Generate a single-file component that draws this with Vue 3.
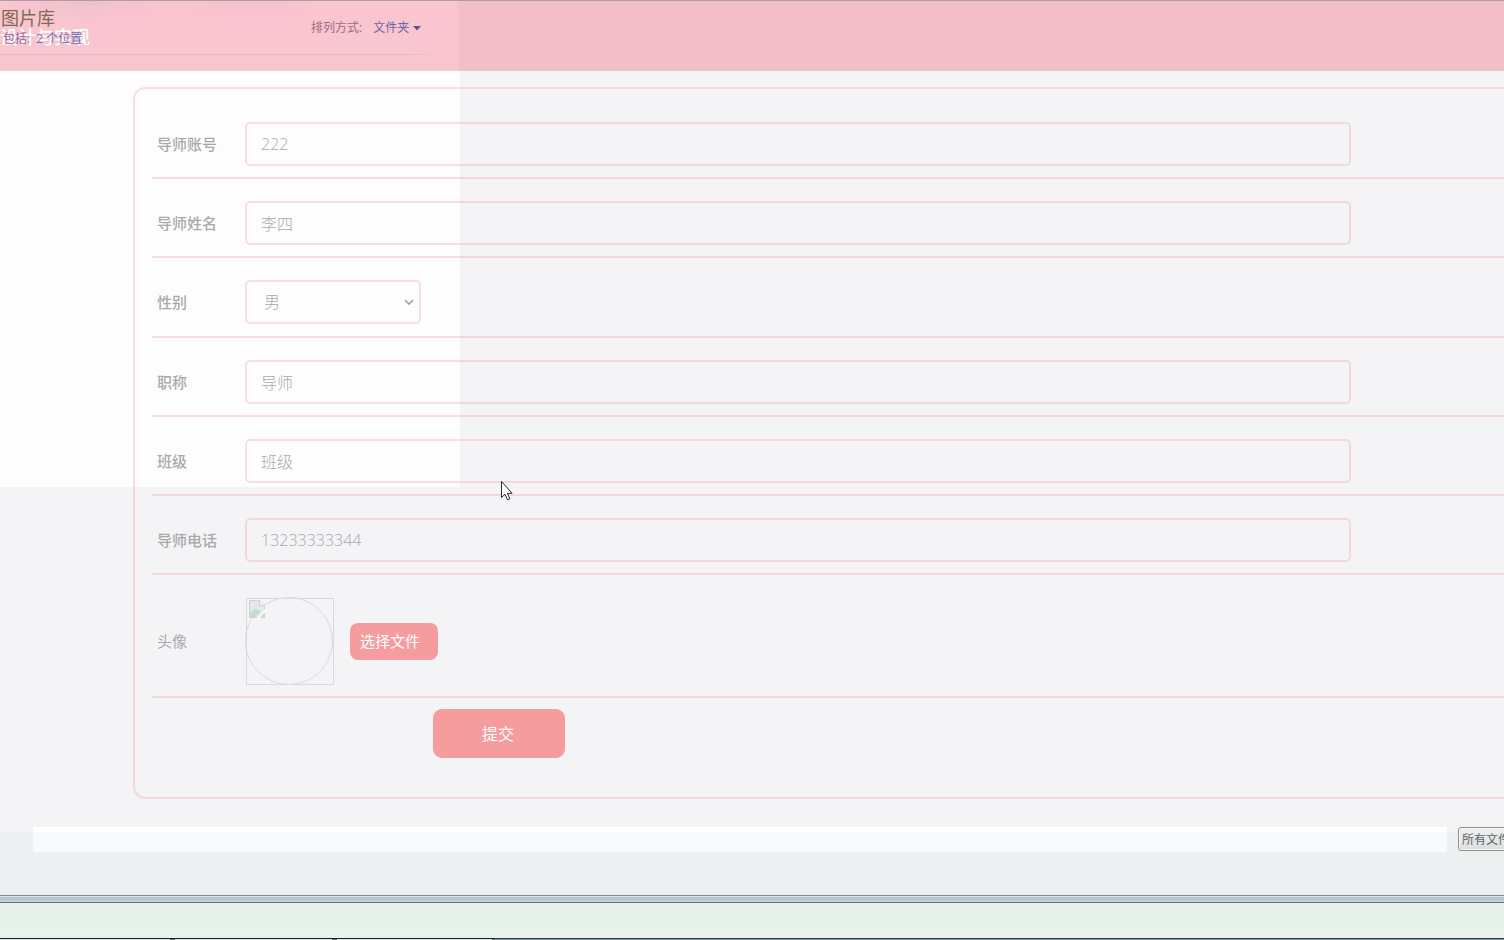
<script setup>
import { reactive } from 'vue'

const form = reactive({
  account: '222',
  name: '李四',
  gender: '男',
  title: '导师',
  klass: '班级',
  phone: '13233333344',
})

const fields = [
  { key: 'account', label: '导师账号' },
  { key: 'name', label: '导师姓名' },
  { key: 'gender', label: '性别', options: ['男', '女'] },
  { key: 'title', label: '职称' },
  { key: 'klass', label: '班级' },
  { key: 'phone', label: '导师电话' },
]
</script>

<template>
  <div class="screen">
    <div class="ghost" aria-hidden="true"></div>

    <header class="topbar">
      <h1 class="site-title">设计与实现</h1>
      <div class="library">
        <div class="library-name">图片库</div>
        <div class="library-info">包括: <a href="#">2 个位置</a></div>
      </div>
      <div class="arrange">
        <span>排列方式:</span>
        <button type="button" class="arrange-button">
          文件夹
          <svg width="8" height="5" viewBox="0 0 8 5"><path d="M0 0h8L4 4.5z" fill="#5b5590" /></svg>
        </button>
      </div>
    </header>

    <main class="content">
      <form class="card" @submit.prevent>
        <div v-for="f in fields" :key="f.key" class="row">
          <label class="label" :for="f.key">{{ f.label }}</label>
          <div v-if="f.options" class="select-wrap">
            <select :id="f.key" v-model="form[f.key]" class="control select">
              <option v-for="o in f.options" :key="o">{{ o }}</option>
            </select>
            <svg class="chevron" width="10" height="7" viewBox="0 0 10 7">
              <path d="M1 1l4 4 4-4" fill="none" stroke="#a3a3a6" stroke-width="1.700" />
            </svg>
          </div>
          <input v-else :id="f.key" v-model="form[f.key]" type="text" class="control text" />
        </div>

        <div class="row">
          <span class="label photo-label">头像</span>
          <svg class="avatar" width="89" height="88" viewBox="0 0 89 88" role="img" aria-label="头像">
            <rect x="1.5" y="1.5" width="87" height="86" fill="none" stroke="#dadade" />
            <circle cx="44" cy="44" r="43.5" fill="none" stroke="#dadade" />
            <path d="M4.5 3.500h10l5 5v12h-15z" fill="#e2e8f2" stroke="#cfcfd6" />
            <path d="M14.500 3.500v5h5" fill="#f6f6f9" stroke="#cfcfd6" />
            <path d="M5 20v-4l5-4 4 1 2 2-6 5z" fill="#c4dcc8" />
            <path d="M11 21.500L20.500 11.500v3.500l-6 6.500z" fill="#f8f9f6" />
            <path d="M15 20.500l4.500-5v5z" fill="#cbdccf" />
          </svg>
          <button type="button" class="file-button">选择文件</button>
        </div>

        <button type="submit" class="submit">提交</button>
      </form>
    </main>

    <section class="file-bar">
      <input type="text" class="filename" aria-label="文件名" />
      <button type="button" class="filter">所有文件</button>
    </section>
    <div class="window-edge"></div>
    <footer class="taskbar">
      <svg class="task-edge" width="500" height="2" viewBox="0 0 500 2">
        <path d="M0 .5h494" stroke="#14211f" />
        <path d="M0 1.500h494" stroke="#dfeae8" />
        <path d="M170 1.500h5M332 1.500h5M492 1.500h3" stroke="#65716f" />
      </svg>
    </footer>

    <svg class="cursor" width="13" height="20" viewBox="0 0 13 20" aria-hidden="true">
      <path d="M.5 .5v16l3.500-3.300 2.600 5.600 2.300-1-2.500-5.500h4.700z" fill="#fff" stroke="#2c2836" />
    </svg>
  </div>
</template>

<style>
body {
  background: #f4f4f6;
}
</style>

<style scoped>
* {
  box-sizing: border-box;
}

.screen {
  position: relative;
  display: flex;
  flex-direction: column;
  min-height: 100vh;
  overflow: hidden;
  isolation: isolate;
  background: #f4f4f6;
  font-family: "Open Sans", "Noto Sans CJK SC", sans-serif;
  font-size: 16px;
}

button,
input,
select {
  font: inherit;
}

/* translucent window left over from the picture library */
.ghost {
  position: absolute;
  z-index: -1;
  top: 0;
  left: 0;
  width: 460px;
  height: 487px;
  background: #fefdfe;
}

.topbar {
  position: relative;
  display: flex;
  height: 71px;
  border-top: 1px solid #b49ba5;
  background: linear-gradient(90deg, #f9c5cf 458px, #f2bec7 458px);
}

.topbar::after {
  content: "";
  position: absolute;
  left: 0;
  top: 53px;
  width: 446px;
  height: 1px;
  background: linear-gradient(90deg, #e5b4c5 90%, #f9c5cf);
}

.site-title {
  position: absolute;
  left: 0;
  top: 24px;
  margin: 0;
  color: #fff;
  font-size: 18px;
  font-weight: 500;
  line-height: 24px;
}

.library {
  position: relative;
  width: 311px;
  padding-top: 5px;
  background: radial-gradient(ellipse 80px 20px at 90px 0, #efc1cd, transparent),
    radial-gradient(ellipse 80px 20px at 250px 0, #f2c2cd, transparent);
}

.library-name {
  padding-left: 1px;
  color: #7f6a55;
  font-size: 18px;
  line-height: 24px;
}

.library-info {
  display: flex;
  gap: 6px;
  padding-left: 3px;
  color: #8f6b97;
  font-size: 12px;
  line-height: 18px;
}

.library-info a {
  color: #6d70b4;
  text-decoration: none;
}

.arrange {
  display: flex;
  align-items: flex-start;
  gap: 11px;
  padding-top: 18px;
  color: #9a6c87;
  font-size: 12px;
  line-height: 18px;
}

.arrange-button {
  display: flex;
  align-items: center;
  gap: 4px;
  padding: 0;
  border: 0;
  background: none;
  color: #6b67a8;
}

.content {
  padding: 16px 0 28px 133px;
}

.card {
  padding: 11px 0 39px 17px;
  border: 2px solid rgba(240, 160, 160, 0.32);
  border-right: 0;
  border-radius: 12px 0 0 12px;
}

.row {
  display: flex;
  align-items: center;
  padding: 22px 153px 11px 5px;
  border-bottom: 2px solid rgba(238, 155, 160, 0.34);
}

.label {
  flex: none;
  width: 88px;
  padding-bottom: 2px;
  color: #a9a9ab;
  font-size: 15px;
  font-weight: 500;
}

.photo-label {
  font-weight: 400;
}

.control {
  height: 44px;
  border: 2px solid rgba(240, 160, 160, 0.32);
  border-radius: 5px;
  background: transparent;
  color: #a9a9ab;
  font-weight: 300;
  outline: none;
}

.text {
  flex: 1;
  min-width: 0;
  padding: 0 14px 1px;
}

.select-wrap {
  position: relative;
  height: 45px;
}

.select {
  width: 176px;
  padding: 0 17px;
  appearance: none;
}

.chevron {
  position: absolute;
  right: 7px;
  top: 19px;
  pointer-events: none;
}

.avatar {
  flex: none;
}

.file-button {
  width: 88px;
  height: 37px;
  margin-left: 16px;
  padding: 0 10px 2px;
  border: 0;
  border-radius: 8px;
  background: #f59c9f;
  color: #fff;
  font-size: 15px;
  text-align: left;
  white-space: nowrap;
}

.submit {
  display: block;
  width: 132px;
  height: 49px;
  margin: 11px 0 0 281px;
  padding: 0 2px 2px 0;
  border: 0;
  border-radius: 9px;
  background: #f59c9f;
  color: #fff;
}

.file-bar {
  display: flex;
  height: 68px;
  padding-left: 33px;
  overflow: hidden;
  background: linear-gradient(#f4f4f6 5px, #ecf0f1 5px);
}

.filename {
  flex: 1;
  min-width: 0;
  height: 25px;
  margin-right: 11px;
  border: 0;
  background: linear-gradient(#fff 5px, #f6fafb 5px);
  font-size: 12px;
  outline: none;
}

.filter {
  flex: none;
  width: 120px;
  height: 24px;
  margin-right: -74px;
  padding: 0 3px;
  border: 1px solid #8f9192;
  border-radius: 3px;
  background: linear-gradient(#f0f0f1, #dcdfe0);
  box-shadow: inset 0 0 0 1px #f7f8f8;
  color: #606264;
  font-size: 12px;
  text-align: left;
}

.window-edge {
  height: 8px;
  border-top: 1px solid #7f8c93;
  border-bottom: 1px solid #616e74;
  background: linear-gradient(#dce5ea 1px, #b5c6d2 1px, #b5c6d2 4px, #c5d1d4 5px);
}

.taskbar {
  display: flex;
  flex: 1;
  align-items: flex-end;
  min-height: 37px;
  background: linear-gradient(#7d98a8, #7d98a8) bottom / 100% 1px no-repeat,
    linear-gradient(#263f59, #263f59) bottom / 100% 2px no-repeat,
    linear-gradient(#e7f0ec, #e6f2ea 90%, #e3f0f3);
}

.task-edge {
  display: block;
}

.cursor {
  position: absolute;
  left: 501px;
  top: 481px;
}
</style>
